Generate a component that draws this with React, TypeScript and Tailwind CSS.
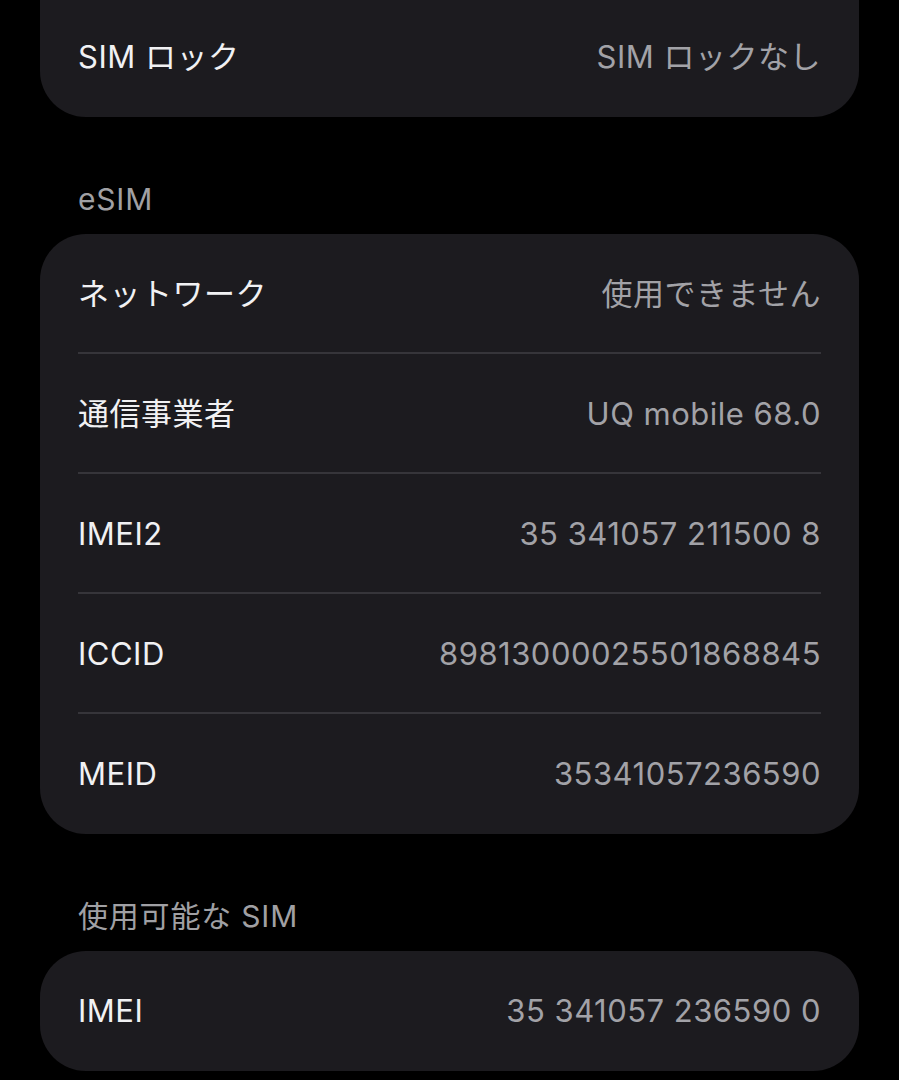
const font = {
  fontFamily: '"Inter", "Noto Sans CJK JP", sans-serif',
};

type Item = { label: string; value: string };

const esimItems: Item[] = [
  { label: "ネットワーク", value: "使用できません" },
  { label: "通信事業者", value: "UQ mobile 68.0" },
  { label: "IMEI2", value: "35 341057 211500 8" },
  { label: "ICCID", value: "89813000025501868845" },
  { label: "MEID", value: "35341057236590" },
];

function Row({ item, divider }: { item: Item; divider?: boolean }) {
  return (
    <div className="relative flex h-[120px] items-center justify-between">
      <span className="text-[31px] tracking-[0.5px] text-[#f1f1f3]">{item.label}</span>
      <span className="text-[31px] tracking-[0.5px] text-[#a2a2a7]">{item.value}</span>
      {divider && (
        <div className="absolute bottom-0 left-0 right-0 h-[2px] bg-[#36353a]" />
      )}
    </div>
  );
}

function Header({ children }: { children: React.ReactNode }) {
  return (
    <div className="flex h-[117px] items-end pb-[12px] pl-[38px] text-[30px] tracking-[0.8px] text-[#a0a0a4]">
      {children}
    </div>
  );
}

export default function App() {
  return (
    <div className="min-h-screen w-full bg-black px-[40px]" style={font}>
      {/* SIM lock card, top cut off */}
      <div className="flex h-[117px] items-center justify-between rounded-b-[46px] bg-[#1c1b1f] px-[38px] pb-[3px]">
        <span className="text-[31px] tracking-[0.5px] text-[#f1f1f3]">SIM ロック</span>
        <span className="text-[31px] tracking-[0.5px] text-[#a2a2a7]">SIM ロックなし</span>
      </div>

      <Header>eSIM</Header>
      <div className="rounded-[46px] bg-[#1c1b1f] px-[38px]">
        {esimItems.map((item, i) => (
          <Row key={item.label} item={item} divider={i < esimItems.length - 1} />
        ))}
      </div>

      <Header>使用可能な SIM</Header>
      <div className="rounded-[46px] bg-[#1c1b1f] px-[38px]">
        <Row item={{ label: "IMEI", value: "35 341057 236590 0" }} />
      </div>
    </div>
  );
}
